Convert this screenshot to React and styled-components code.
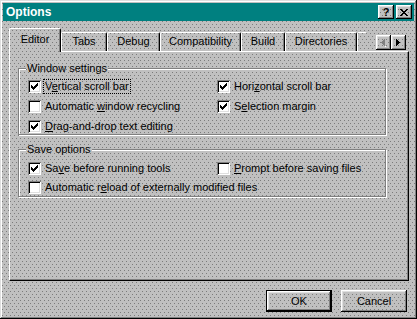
import React from 'react';
import styled, { createGlobalStyle, css } from 'styled-components';

const dither = css`
  background-color: #c0c0c0;
  background-image:
    conic-gradient(at 1px 1px, transparent 75%, #7c7c7c 0),
    conic-gradient(at 1px 1px, transparent 75%, #7c7c7c 0);
  background-size: 4px 6px, 4px 6px;
  background-position: 0 0, 2px 3px;
  background-attachment: fixed;
`;

const raised = css`
  box-shadow: inset -1px -1px #000, inset 1px 1px #fff, inset -2px -2px #808080, inset 2px 2px #dfdfdf;
`;

const Global = createGlobalStyle`
  html, body { margin: 0; padding: 0; }
  body {
    font-family: "Liberation Sans", Arial, sans-serif;
    font-size: 11px;
    color: #000;
  }
`;

const Window = styled.div`
  ${dither}
  width: 417px;
  height: 319px;
  box-sizing: border-box;
  padding: 3px;
  display: flex;
  flex-direction: column;
  box-shadow: inset -1px -1px #000, inset 1px 1px #dfdfdf, inset -2px -2px #808080, inset 2px 2px #fff;
`;

const TitleBar = styled.div`
  height: 18px;
  background: #008080;
  display: flex;
  align-items: center;
  padding: 0 2px 0 3px;
  color: #fff;
  font-weight: bold;
  font-size: 12px;
`;

const Title = styled.div`
  flex: 1;
`;

const TitleButton = styled.div`
  ${dither}
  ${raised}
  width: 16px;
  height: 14px;
  margin-left: 2px;
  display: grid;
  place-items: center;
  color: #000;
  font-weight: bold;
  font-size: 11px;
  line-height: 14px;
`;

const Body = styled.div`
  flex: 1;
  padding: 7px 5px 0 6px;
  display: flex;
  flex-direction: column;
`;

const TabStrip = styled.div`
  display: flex;
  align-items: flex-end;
  height: 23px;
`;

const Tab = styled.div`
  ${dither}
  position: relative;
  z-index: ${p => (p.$active ? 2 : 0)};
  box-sizing: border-box;
  width: ${p => p.$w}px;
  height: ${p => (p.$active ? 24 : 19)}px;
  margin-bottom: ${p => (p.$active ? -1 : 0)}px;
  border-top: 1px solid #fff;
  border-left: 1px solid #fff;
  border-right: 1px solid ${p => (p.$clipped ? 'transparent' : '#000')};
  border-top-left-radius: 2px;
  border-top-right-radius: 2px;
  box-shadow: ${p => (p.$clipped ? 'none' : 'inset -1px 0 #808080')};
  display: flex;
  justify-content: center;
  padding-top: ${p => (p.$active ? 4 : 2)}px;
  line-height: 13px;
  white-space: nowrap;
`;

const Scroller = styled.div`
  display: flex;
  margin-left: auto;
  margin-right: 3px;
  margin-bottom: 1px;
`;

const ScrollButton = styled.div`
  ${dither}
  ${raised}
  width: 15px;
  height: 15px;
  display: grid;
  place-items: center;
`;

const Panel = styled.div`
  ${dither}
  position: relative;
  z-index: 1;
  box-sizing: border-box;
  height: 230px;
  border: 1px solid;
  border-color: #fff #000 #000 #fff;
  box-shadow: inset -1px -1px #808080;
  padding: 10px 0 0 8px;
`;

const Group = styled.fieldset`
  box-sizing: border-box;
  width: 368px;
  margin: 0 0 8px;
  padding: ${p => p.$pt}px 0 ${p => p.$pb}px 9px;
  border: 1px solid #808080;
  box-shadow: 1px 1px 0 #fff, inset 1px 1px 0 #fff;
  min-width: 0;
`;

const Legend = styled.legend`
  ${dither}
  margin-left: -2px;
  padding: 0 1px;
  line-height: 13px;
`;

const Grid = styled.div`
  display: grid;
  grid-template-columns: 189px auto;
  row-gap: ${p => p.$gap}px;
`;

const CheckRow = styled.label`
  display: flex;
  align-items: center;
  gap: 4px;
  height: 13px;
  line-height: 13px;
  white-space: nowrap;
  grid-column: ${p => (p.$span ? '1 / -1' : 'auto')};
`;

const Box = styled.span`
  width: 13px;
  height: 13px;
  flex: none;
  background: #fff;
  display: grid;
  place-items: center;
  box-shadow: inset 1px 1px #808080, inset -1px -1px #fff, inset 2px 2px #000, inset -2px -2px #dfdfdf;
`;

const Text = styled.span`
  outline: ${p => (p.$focus ? '1px dotted #000' : 'none')};
  outline-offset: 0;
  padding: 0 1px;
  margin-left: -1px;
`;

const Footer = styled.div`
  display: flex;
  justify-content: flex-end;
  gap: 9px;
  padding: 9px 2px 0 0;
`;

const Button = styled.div`
  ${dither}
  box-sizing: border-box;
  width: 66px;
  height: 22px;
  display: grid;
  place-items: center;
  ${raised}
  ${p =>
    p.$default &&
    css`
      border: 1px solid #000;
    `}
`;

const checkCols = [2, 3, 4, 3, 2, 1, 0];

const CheckMark = () => (
  <svg width="7" height="7" viewBox="0 0 7 7" shapeRendering="crispEdges">
    <path d={checkCols.map((r, c) => `M${c} ${r}h1v3h-1z`).join('')} fill="#000" />
  </svg>
);

const xRows = [
  [[0, 2], [6, 2]],
  [[1, 2], [5, 2]],
  [[2, 4]],
  [[3, 2]],
  [[2, 4]],
  [[1, 2], [5, 2]],
  [[0, 2], [6, 2]],
];

const CloseGlyph = () => (
  <svg width="8" height="7" viewBox="0 0 8 7" shapeRendering="crispEdges">
    <path
      d={xRows.map((row, y) => row.map(([x, w]) => `M${x} ${y}h${w}v1h-${w}z`).join('')).join('')}
      fill="#000"
    />
  </svg>
);

const Arrow = ({ dir, disabled }) => (
  <svg width="5" height="8" viewBox="0 0 5 8" shapeRendering="crispEdges">
    {dir === 'left' ? (
      <>
        {disabled && <path d="M1 4h1v1h1v1h1v1h1v1h-1v-1h-1v-1h-1v-1h-1z" fill="#fff" />}
        <path d="M4 0v7h-1v-1h-1v-1h-1v-1h-1v-1h1v-1h1v-1h1v-1z" fill={disabled ? '#808080' : '#000'} />
      </>
    ) : (
      <path d="M0 0v7h1v-1h1v-1h1v-1h1v-1h-1v-1h-1v-1h-1v-1z" fill="#000" />
    )}
  </svg>
);

const Check = ({ checked, focus, span, children }) => (
  <CheckRow $span={span}>
    <Box>{checked && <CheckMark />}</Box>
    <Text $focus={focus}>{children}</Text>
  </CheckRow>
);

const tabs = [
  ['Editor', 52],
  ['Tabs', 46],
  ['Debug', 53],
  ['Compatibility', 81],
  ['Build', 44],
  ['Directories', 72],
];

export default function App() {
  return (
    <>
      <Global />
      <Window>
        <TitleBar>
          <Title>Options</Title>
          <TitleButton>?</TitleButton>
          <TitleButton>
            <CloseGlyph />
          </TitleButton>
        </TitleBar>
        <Body>
          <TabStrip>
            {tabs.map(([name, w], i) => (
              <Tab key={name} $w={w} $active={i === 0}>
                {name}
              </Tab>
            ))}
            <Tab $w={10} $clipped />
            <Scroller>
              <ScrollButton>
                <Arrow dir="left" disabled />
              </ScrollButton>
              <ScrollButton>
                <Arrow dir="right" />
              </ScrollButton>
            </Scroller>
          </TabStrip>
          <Panel>
            <Group $pt={5} $pb={1}>
              <Legend>Window settings</Legend>
              <Grid $gap={7}>
                <Check checked focus>
                  V<u>e</u>rtical scroll bar
                </Check>
                <Check checked>
                  Hori<u>z</u>ontal scroll bar
                </Check>
                <Check>
                  Automatic <u>w</u>indow recycling
                </Check>
                <Check checked>
                  S<u>e</u>lection margin
                </Check>
                <Check checked span>
                  <u>D</u>rag-and-drop text editing
                </Check>
              </Grid>
            </Group>
            <Group $pt={6} $pb={2}>
              <Legend>Save options</Legend>
              <Grid $gap={6}>
                <Check checked>
                  Sa<u>v</u>e before running tools
                </Check>
                <Check>
                  <u>P</u>rompt before saving files
                </Check>
                <Check span>
                  Automatic r<u>e</u>load of externally modified files
                </Check>
              </Grid>
            </Group>
          </Panel>
          <Footer>
            <Button $default>OK</Button>
            <Button>Cancel</Button>
          </Footer>
        </Body>
      </Window>
    </>
  );
}
